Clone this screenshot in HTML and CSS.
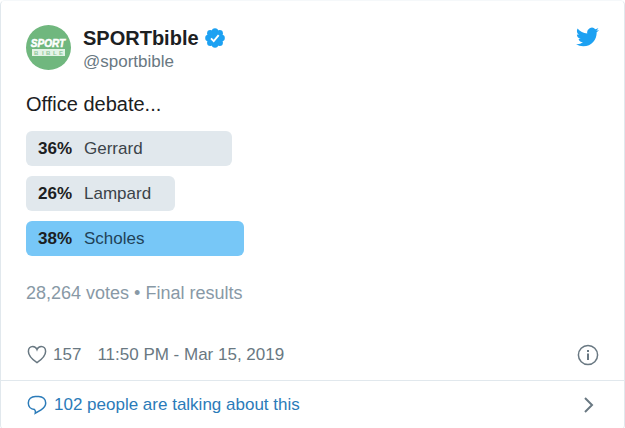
FILE: index.html
```
<!DOCTYPE html>
<html lang="en">
<head>
    <meta charset="UTF-8">
    <meta name="viewport" content="width=device-width, initial-scale=1.0">
    <title>SPORTbible on Twitter</title>
    <link rel="stylesheet" href="styles.css">
</head>
<body>
    <article class="tweet">
        <div class="tweet-body">
            <header class="tweet-header">
                <a class="author" href="#">
                    <svg class="avatar" viewBox="0 0 45 45" aria-hidden="true">
                        <circle cx="22.5" cy="22.5" r="22.5" fill="#70b77e"/>
                        <text class="avatar-sport" x="22" y="22" text-anchor="middle">SPORT</text>
                        <rect x="6" y="24" width="33" height="7" fill="#e3f3e6"/>
                        <text class="avatar-bible" x="8 16 20 27 33" y="30">BIBLE</text>
                    </svg>
                    <span class="names">
                        <span class="name">SPORTbible
                            <svg class="verified" viewBox="0 0 20 20" aria-hidden="true">
                                <g fill="#1da1f2">
                                    <circle cx="10" cy="10" r="7.5"/>
                                    <circle cx="10" cy="3.4" r="3.2"/>
                                    <circle cx="14.7" cy="5.3" r="3.2"/>
                                    <circle cx="16.6" cy="10" r="3.2"/>
                                    <circle cx="14.7" cy="14.7" r="3.2"/>
                                    <circle cx="10" cy="16.6" r="3.2"/>
                                    <circle cx="5.3" cy="14.7" r="3.2"/>
                                    <circle cx="3.4" cy="10" r="3.2"/>
                                    <circle cx="5.3" cy="5.3" r="3.2"/>
                                </g>
                                <path d="M6 10.4l2.7 2.7 5-6" fill="none" stroke="#fff" stroke-width="1.9"/>
                            </svg>
                        </span>
                        <span class="handle">@sportbible</span>
                    </span>
                </a>
                <a class="brand" href="#" aria-label="View on Twitter">
                    <svg class="bird" viewBox="0 0 24 24" aria-hidden="true">
                        <path fill="#1da1f2" d="M23.954 4.569a10 10 0 0 1-2.825.775 4.958 4.958 0 0 0 2.163-2.723 9.99 9.99 0 0 1-3.127 1.184 4.92 4.92 0 0 0-8.384 4.482C7.691 8.094 4.066 6.13 1.64 3.161a4.822 4.822 0 0 0-.666 2.475c0 1.71.87 3.213 2.188 4.096a4.904 4.904 0 0 1-2.228-.616v.061a4.923 4.923 0 0 0 3.946 4.827 4.996 4.996 0 0 1-2.212.085 4.937 4.937 0 0 0 4.604 3.417 9.868 9.868 0 0 1-6.102 2.105c-.39 0-.779-.023-1.17-.067a13.995 13.995 0 0 0 7.557 2.209c9.054 0 13.999-7.496 13.999-13.986 0-.209 0-.42-.015-.63a9.936 9.936 0 0 0 2.46-2.548z"/>
                    </svg>
                </a>
            </header>

            <p class="text">Office debate...</p>

            <ul class="poll">
                <li class="choice" style="width: 36%"><b>36%</b><span>Gerrard</span></li>
                <li class="choice" style="width: 26%"><b>26%</b><span>Lampard</span></li>
                <li class="choice winner" style="width: 38%"><b>38%</b><span>Scholes</span></li>
            </ul>
            <p class="votes">28,264 votes • Final results</p>

            <div class="meta">
                <a class="likes" href="#" aria-label="157 likes">
                    <svg class="icon" viewBox="0 0 22 22" aria-hidden="true">
                        <path d="M11 18.6C7.2 16 2.4 11.800 2.400 7.400 2.400 4.500 4.300 2.500 6.700 2.500 8.700 2.500 10.300 3.700 11 5.600 11.700 3.700 13.300 2.500 15.300 2.500 17.700 2.500 19.600 4.500 19.600 7.400 19.600 11.800 14.800 16 11 18.600z"/>
                    </svg>
                    <span>157</span>
                </a>
                <a class="date" href="#">11:50 PM - Mar 15, 2019</a>
                <a class="info" href="#" aria-label="Twitter Ads info and privacy">
                    <svg class="icon" viewBox="0 0 22 22" aria-hidden="true">
                        <circle cx="11" cy="11" r="9.6"/>
                        <path d="M11 9.5v6.5M11 6v2" stroke-width="2"/>
                    </svg>
                </a>
            </div>
        </div>

        <a class="replies" href="#">
            <svg class="icon" viewBox="0 0 22 22" aria-hidden="true">
                <path d="M8.500 15.500C4.800 15.300 2.300 12.500 2.300 9 2.300 5.200 5.300 2.400 9.300 2.400h3.400c4 0 7 2.800 7 6.600 0 3.300-2 5.200-4.600 6.800l-5.800 3.400c.3-1.200.1-2.800-.8-3.700z"/>
            </svg>
            <span>102 people are talking about this</span>
            <svg class="icon chevron" viewBox="0 0 22 22" aria-hidden="true">
                <path d="M8 4l7 7-7 7"/>
            </svg>
        </a>
    </article>
</body>
</html>
```

FILE: styles.css
```
body {
    margin: 0;
    background-color: #fff;
    font-family: "Liberation Sans", Arial, sans-serif;
    font-size: 17px;
    line-height: 24px;
    color: #1c2022;
    overflow: hidden;
}

a {
    color: inherit;
    text-decoration: none;
}

.tweet {
    border: 1px solid #e1e8ed;
    border-top-color: #f5f8fa;
    border-radius: 5px;
}

.tweet-body {
    padding: 24px 25px 13px;
}

.tweet-header {
    display: flex;
    justify-content: space-between;
    align-items: flex-start;
}

.author {
    display: flex;
    align-items: flex-start;
    gap: 12px;
}

.avatar {
    width: 45px;
    height: 45px;
}

.avatar-sport {
    font: italic bold 10px "Liberation Sans", Arial, sans-serif;
    fill: #fff;
    stroke: #fff;
    stroke-width: 0.5;
}

.avatar-bible {
    font: bold 6px "Liberation Sans", Arial, sans-serif;
    fill: #8fc79a;
}

.names {
    display: flex;
    flex-direction: column;
    padding-top: 1px;
}

.name {
    display: flex;
    align-items: center;
    gap: 6px;
    font-size: 20px;
    font-weight: bold;
}

.verified {
    width: 20px;
    height: 20px;
}

.handle {
    color: #697882;
}

.bird {
    display: block;
    width: 23px;
    height: 24px;
}

.text {
    margin: 18px 0 15px;
    font-size: 20px;
}

.poll {
    display: flex;
    flex-direction: column;
    gap: 10px;
    margin: 0;
    padding: 0;
    list-style: none;
}

.choice {
    display: flex;
    align-items: center;
    gap: 12px;
    box-sizing: border-box;
    height: 35px;
    padding: 0 12px;
    border-radius: 6px;
    background-color: #e1e8ed;
    white-space: nowrap;
}

.choice span {
    color: #3b4349;
}

.winner {
    background-color: #77c7f7;
}

.winner span {
    color: #1f4257;
}

.votes {
    margin: 25px 0 38px;
    font-size: 18px;
    color: #8899a6;
}

.meta {
    display: flex;
    align-items: center;
    color: #697882;
}

.likes {
    display: flex;
    align-items: center;
    gap: 5px;
    margin-right: 16px;
}

.info {
    margin-left: auto;
}

.icon {
    display: block;
    width: 22px;
    height: 22px;
    fill: none;
    stroke: currentColor;
    stroke-width: 1.5;
}

.replies {
    display: flex;
    align-items: center;
    gap: 6px;
    padding: 12px 25px;
    border-top: 1px solid #e1e8ed;
    color: #2b7bb9;
}

.chevron {
    margin-left: auto;
    color: #697882;
    stroke-width: 2;
}
```
